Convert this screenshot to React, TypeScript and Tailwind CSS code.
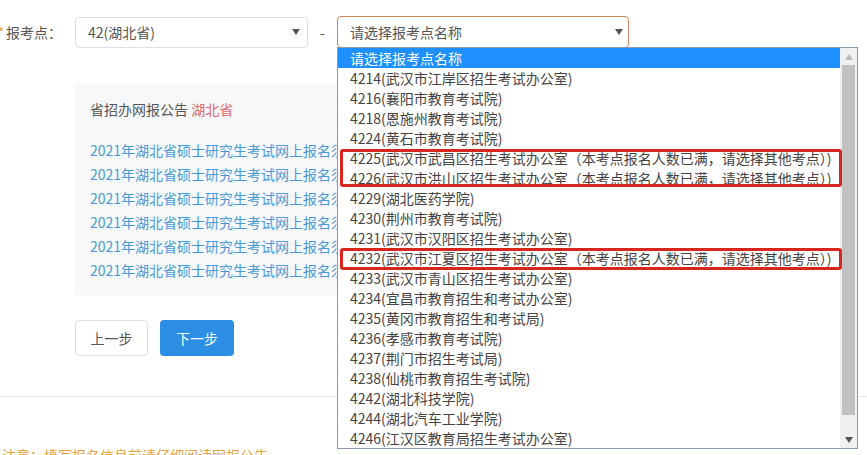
const options = [
  "4214(武汉市江岸区招生考试办公室)",
  "4216(襄阳市教育考试院)",
  "4218(恩施州教育考试院)",
  "4224(黄石市教育考试院)",
  "4225(武汉市武昌区招生考试办公室（本考点报名人数已满，请选择其他考点）)",
  "4226(武汉市洪山区招生考试办公室（本考点报名人数已满，请选择其他考点）)",
  "4229(湖北医药学院)",
  "4230(荆州市教育考试院)",
  "4231(武汉市汉阳区招生考试办公室)",
  "4232(武汉市江夏区招生考试办公室（本考点报名人数已满，请选择其他考点）)",
  "4233(武汉市青山区招生考试办公室)",
  "4234(宜昌市教育招生和考试办公室)",
  "4235(黄冈市教育招生和考试局)",
  "4236(孝感市教育考试院)",
  "4237(荆门市招生考试局)",
  "4238(仙桃市教育招生考试院)",
  "4242(湖北科技学院)",
  "4244(湖北汽车工业学院)",
  "4246(江汉区教育局招生考试办公室)",
];

const Caret = ({ className = "" }: { className?: string }) => (
  <svg width="8" height="6" viewBox="0 0 8 6" className={className}>
    <path d="M0 0 L8 0 L4 6 Z" fill="currentColor" />
  </svg>
);

const Dropdown = () => {
  return (
    <div className="absolute left-0 top-[31px] w-[521px] h-[402px] border border-[#8a99ad] bg-white flex">
      <ul className="flex-1 overflow-hidden">
        <li className="h-[20px] pl-[12px] bg-[#1e90ff] text-white leading-[20px] whitespace-nowrap">
          请选择报考点名称
        </li>
        {options.map((o) => (
          <li key={o} className="h-[20px] pl-[12px] leading-[20px] text-[#444] whitespace-nowrap">
            {o}
          </li>
        ))}
      </ul>
      <div className="w-[17px] shrink-0 flex flex-col bg-[#f0f0f0]">
        <div className="h-[17px] flex items-center justify-center text-[#bdbdbd]">
          <Caret className="rotate-180" />
        </div>
        <div className="mx-[2px] h-[350px] bg-[#c1c1c1]" />
        <div className="flex-1" />
        <div className="h-[17px] flex items-center justify-center text-[#555]">
          <Caret />
        </div>
      </div>
      {/* highlight boxes */}
      <div className="absolute left-[2px] top-[101px] w-[502px] h-[38px] border-[3px] border-[#d7261e] rounded-[3px]" />
      <div className="absolute left-[2px] top-[200px] w-[502px] h-[22px] border-[3px] border-[#d7261e] rounded-[3px]" />
    </div>
  );
};

export default function App() {
  return (
    <div
      className="relative w-[867px] h-[455px] overflow-hidden bg-white text-[14px] text-[#555]"
      style={{ fontFamily: '"Noto Sans CJK SC", "Noto Sans", sans-serif' }}
    >
      <div className="flex items-center pt-[16px]">
        <div className="w-[75px] flex justify-end pr-[13px] whitespace-nowrap text-[#555]">
          <span className="text-[#e6a23c] mr-[2px]">*</span>报考点：
        </div>
        <div className="w-[233px] h-[31px] border border-[#dcdfe6] rounded-[4px] flex items-center justify-between pl-[12px] pr-[7px]">
          <span>42(湖北省)</span>
          <Caret className="text-[#555]" />
        </div>
        <span className="w-[29px] text-center">-</span>
        <div className="relative">
          <div className="w-[292px] h-[32px] border border-[#c88a5e] rounded-[4px] flex items-center justify-between pl-[12px] pr-[5px]">
            <span>请选择报考点名称</span>
            <Caret className="text-[#555]" />
          </div>
          <Dropdown />
        </div>
      </div>

      <div className="ml-[75px] mt-[35px] w-[300px] h-[212px] bg-[#f7f8fa] pl-[15px] pt-[16px]">
        <div className="leading-[20px] whitespace-nowrap">
          省招办网报公告 <span className="text-[#e0686b]">湖北省</span>
        </div>
        <ul className="mt-[19px] text-[#4a98d8] whitespace-nowrap">
          {[0, 1, 2, 3, 4, 5].map((i) => (
            <li key={i} className="h-[24px] leading-[24px]">
              2021年湖北省硕士研究生考试网上报名须知
            </li>
          ))}
        </ul>
      </div>

      <div className="ml-[75px] mt-[25px] flex gap-[12px]">
        <button className="w-[73px] h-[36px] border border-[#dcdfe6] rounded-[4px] bg-white text-[#555]">
          上一步
        </button>
        <button className="w-[74px] h-[36px] rounded-[4px] bg-[#2c8fe3] text-white">
          下一步
        </button>
      </div>

      <div className="mt-[40px] h-px bg-[#e4e4e4]" />

      <div className="mt-[48px] pl-[2px] text-[#e6a23c] whitespace-nowrap leading-[20px]">
        注意：填写报名信息前请仔细阅读网报公告
      </div>
    </div>
  );
}
